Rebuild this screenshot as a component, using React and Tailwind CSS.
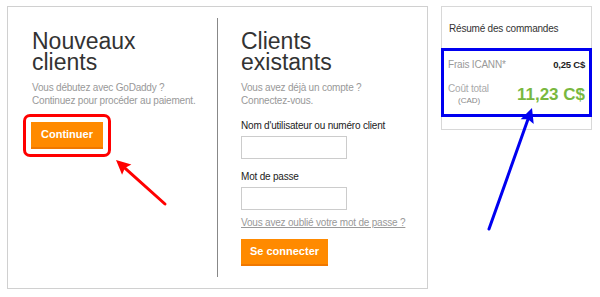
import React from 'react';

const font = { fontFamily: '"Liberation Sans", Arial, sans-serif' };

const Arrow = ({ x1, y1, x2, y2, color }) => {
  const ang = Math.atan2(y2 - y1, x2 - x1);
  const len = 16;
  const w = 0.45;
  const ax = x2 - len * Math.cos(ang - w);
  const ay = y2 - len * Math.sin(ang - w);
  const bx = x2 - len * Math.cos(ang + w);
  const by = y2 - len * Math.sin(ang + w);
  const mx = x2 - (len - 4) * Math.cos(ang);
  const my = y2 - (len - 4) * Math.sin(ang);
  return (
    <g>
      <line x1={x1} y1={y1} x2={mx} y2={my} stroke={color} strokeWidth="3" strokeLinecap="round" />
      <polygon points={`${x2},${y2} ${ax},${ay} ${mx},${my} ${bx},${by}`} fill={color} />
    </g>
  );
};

export default function App() {
  return (
    <div className="relative w-[600px] h-[297px] bg-white overflow-hidden" style={font}>
      <div className="flex items-start pt-[6px] pl-[7px] gap-[13px]">
        {/* login panel */}
        <div className="flex w-[421px] h-[283px] border border-[#d0d0d0] py-[11px]">
          <div className="w-[209px] pl-[24px] pt-[13px]">
            <h1 className="text-[23px] leading-[21px] text-[#333]">Nouveaux<br />clients</h1>
            <p className="mt-[8px] text-[10px] leading-[13px] tracking-[-0.2px] text-[#999]">
              Vous débutez avec GoDaddy ?<br />Continuez pour procéder au paiement.
            </p>
            <div className="mt-[7px] ml-[-9px] w-[88px] h-[43px] rounded-[7px] border-[3px] border-[#ff0000] flex items-center justify-center">
              <button className="w-[72px] h-[27px] bg-[#ff8a00] text-white text-[11px] font-bold border-b-2 border-[#f07800]">Continuer</button>
            </div>
          </div>
          <div className="w-px bg-[#888]" />
          <div className="pl-[23px] pt-[13px]">
            <h1 className="text-[23px] leading-[21px] text-[#333]">Clients<br />existants</h1>
            <p className="mt-[8px] text-[10px] leading-[13px] tracking-[-0.2px] text-[#999]">
              Vous avez déjà un compte ?<br />Connectez-vous.
            </p>
            <div className="mt-[13px] text-[10px] leading-[12px] tracking-[-0.2px] text-[#222]">Nom d'utilisateur ou numéro client</div>
            <div className="mt-[4px] w-[106px] h-[23px] border border-[#ccc]" />
            <div className="mt-[12px] text-[10px] leading-[12px] tracking-[-0.2px] text-[#222]">Mot de passe</div>
            <div className="mt-[4px] w-[106px] h-[23px] border border-[#ccc]" />
            <div className="mt-[7px] text-[10px] leading-[12px] tracking-[-0.2px] text-[#999] underline">Vous avez oublié votre mot de passe ?</div>
            <button className="mt-[10px] w-[87px] h-[27px] bg-[#ff8a00] text-white text-[11px] font-bold border-b-2 border-[#f07800]">Se connecter</button>
          </div>
        </div>
        {/* summary */}
        <div className="w-[151px] h-[124px] border border-[#d8d8d8]">
          <div className="pl-[7px] pt-[16px] text-[10px] leading-[12px] tracking-[-0.2px] text-[#333]">Résumé des commandes</div>
          <div className="mt-[13px] -ml-px w-[151px] h-[69px] border-[3px] border-[#0000f0] px-[4px] pt-[8px]">
            <div className="flex justify-between items-center text-[10px] leading-[12px] tracking-[-0.2px]">
              <span className="text-[#999]">Frais ICANN*</span>
              <span className="font-bold text-[9.5px] text-[#222]">0,25 C$</span>
            </div>
            <div className="flex justify-between mt-[11px]">
              <div>
                <div className="text-[10px] leading-[13px] tracking-[-0.2px] text-[#aaa]">Coût total</div>
                <div className="pl-[10px] text-[8px] leading-[12px] text-[#888]">(CAD)</div>
              </div>
              <span className="text-[17px] font-bold text-[#79b83f] leading-[26px]">11,23 C$</span>
            </div>
          </div>
        </div>
      </div>
      <svg className="absolute inset-0 pointer-events-none" width="600" height="297">
        <Arrow x1={165} y1={204} x2={116} y2={160} color="#ff0000" />
        <Arrow x1={489} y1={229} x2={532} y2={108} color="#0000f0" />
      </svg>
    </div>
  );
}
